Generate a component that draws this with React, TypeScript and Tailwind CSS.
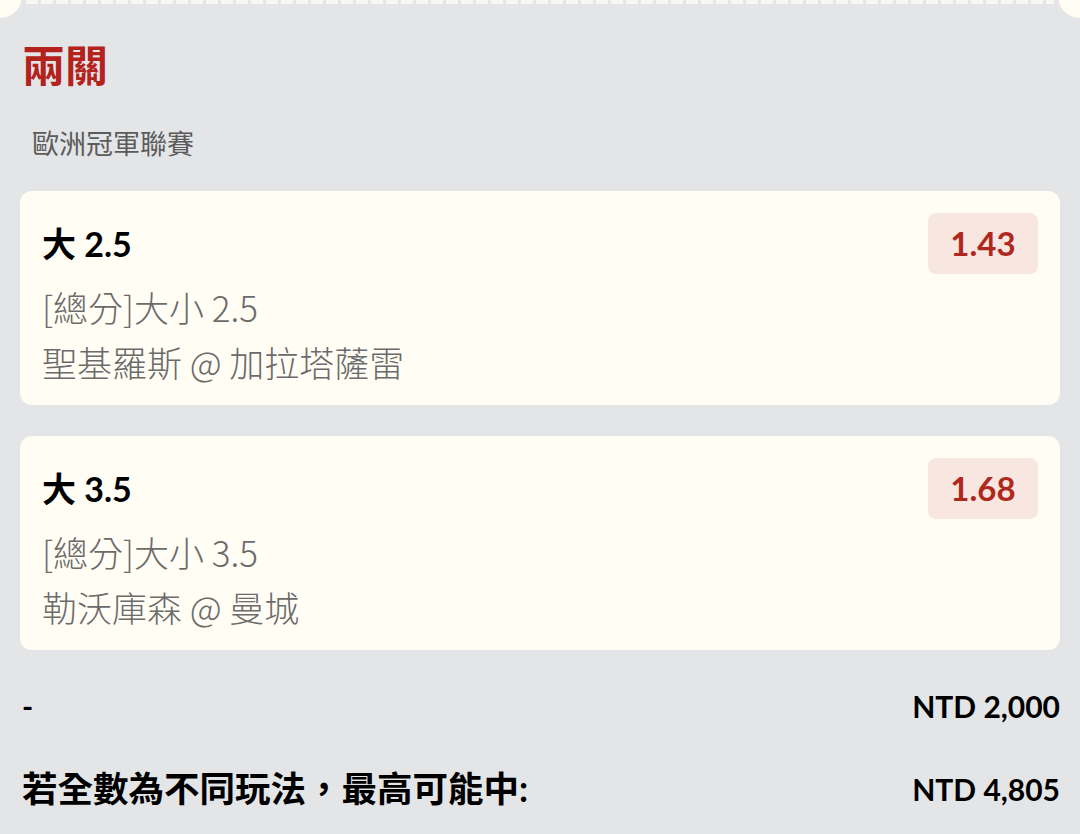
import React from 'react';

type Leg = {
  pick: string;
  market: string;
  match: string;
  odds: string;
};

const legs: Leg[] = [
  { pick: '大 2.5', market: '[總分]大小 2.5', match: '聖基羅斯 @ 加拉塔薩雷', odds: '1.43' },
  { pick: '大 3.5', market: '[總分]大小 3.5', match: '勒沃庫森 @ 曼城', odds: '1.68' },
];

function LegCard({ leg }: { leg: Leg }) {
  return (
    <div className="rounded-[12px] bg-[#fffdf4] px-[22px] pt-[22px] pb-[16px]">
      {/* 選項 + 賠率 */}
      <div className="flex items-center justify-between">
        <span className="text-[34px] font-bold text-black leading-none">{leg.pick}</span>
        <span className="flex h-[61px] w-[110px] items-center justify-center rounded-[8px] bg-[#f8e7e0] text-[33px] font-bold text-[#b0271d]">
          {leg.odds}
        </span>
      </div>
      <div
        className="mt-[5px] text-[35px] font-light leading-[55px] text-[#6b6b6b]"
        style={{ fontFamily: '"Noto Sans CJK TC", sans-serif' }}
      >
        <div>{leg.market}</div>
        <div>{leg.match}</div>
      </div>
    </div>
  );
}

export default function App() {
  return (
    <div
      className="relative min-h-[834px] w-[1080px] overflow-hidden bg-[#e4e5e7] px-[20px]"
      style={{ fontFamily: 'Lato, "Noto Sans CJK TC", sans-serif' }}
    >
      {/* 票券鋸齒邊 */}
      <div className="absolute left-0 top-[-26px] h-[44px] w-[44px] -translate-x-1/2 rounded-full bg-[#fffdf4]" />
      <div className="absolute right-0 top-[-26px] h-[44px] w-[44px] translate-x-1/2 rounded-full bg-[#fffdf4]" />
      <div className="mx-[6px] h-[4px] bg-[repeating-linear-gradient(90deg,#f7f7f3_0_12px,transparent_12px_15px)]" />

      <h1 className="mt-[37px] pl-[2px] text-[43px] font-bold leading-[50px] text-[#b3221c]">兩關</h1>
      <div className="mt-[35px] pl-[12px] text-[27px] leading-[36px] text-[#5c5c5c]">歐洲冠軍聯賽</div>

      <div className="mt-[29px] flex flex-col gap-[31px]">
        {legs.map((leg) => (
          <LegCard key={leg.odds} leg={leg} />
        ))}
      </div>

      {/* 投注金額 */}
      <div className="mt-[36px] flex items-center justify-between pl-[2px] text-[30px] font-bold leading-[40px] text-black">
        <span>-</span>
        <span>NTD 2,000</span>
      </div>
      <div className="mt-[43px] flex items-center justify-between pl-[2px] text-[30px] font-bold leading-[40px] text-black">
        <span className="text-[35.5px]">若全數為不同玩法，最高可能中:</span>
        <span>NTD 4,805</span>
      </div>
    </div>
  );
}
